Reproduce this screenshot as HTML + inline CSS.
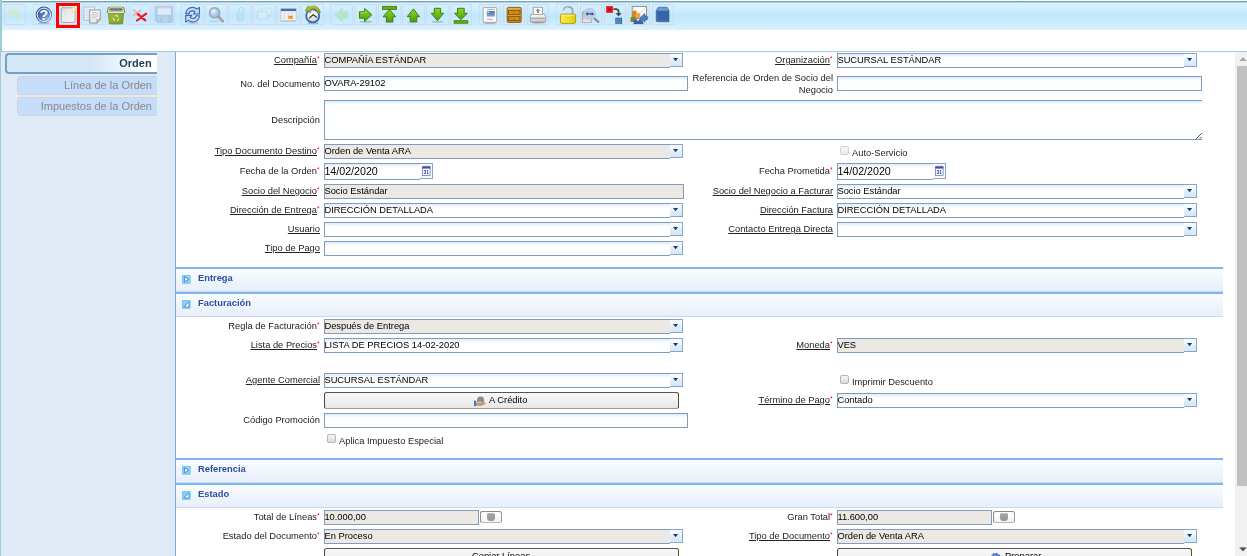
<!DOCTYPE html><html lang="es"><head><meta charset="utf-8"><title>Orden de Venta</title><style>
*{box-sizing:border-box;margin:0;padding:0}
#all{position:absolute;left:0;top:0;width:1247px;height:556px;will-change:transform}
html,body{width:1247px;height:556px;overflow:hidden;background:#fff}
body{position:relative;font-family:"Liberation Sans",sans-serif;font-size:9.33px;color:#222}
.abs{position:absolute}
#tb{position:absolute;left:0;top:1px;width:1247px;height:29px;background:linear-gradient(#78a5c1 0,#78a5c1 1px,#a5cfe2 1px,#a5cfe2 2px,#d9f3fe 2px,#d2effe 20%,#bfe8fd 52%,#cdecfd 78%,#daf3fe 100%)}
#lb{position:absolute;left:0;top:0;width:2px;height:52px;background:#9ccbdc}
#lb2{position:absolute;left:0;top:52px;width:1px;height:504px;background:#9ccbdc}
.tbtn{position:absolute;top:4px;width:22px;height:21px;border:1px solid #d2d9ee}
.tbtn svg{position:absolute;left:-1px;top:-1px;width:22px;height:21px;overflow:visible}

#hl{position:absolute;left:56px;top:3px;width:24px;height:25px;border:3px solid #f00;z-index:5}
#sep{position:absolute;left:2px;top:51px;width:1245px;height:1px;background:#a3cde0}
#left{position:absolute;left:1px;top:52px;width:174px;height:504px;background:#e0e9f6}
#lborder{position:absolute;left:175px;top:52px;width:1px;height:504px;background:#80a9ca}
.tab0{position:absolute;left:5px;top:53px;width:152px;height:21px;border:2px solid #72a1c5;border-right:0;border-radius:4px 0 0 4px;background:linear-gradient(90deg,#d3e7f4 0,#d3e7f4 55%,#fff 92%);font-weight:bold;font-size:11px;color:#1f3f5c;text-align:right;padding-right:5.4px;line-height:17px}
.tab1{position:absolute;left:17px;width:140px;height:19px;border:1px solid #d5d2d0;border-right:0;border-radius:4px 0 0 4px;background:#c5dcfb;font-size:11px;color:#8a8a8a;text-align:right;padding-right:5px;line-height:16px}
.lbl{position:absolute;text-align:right;white-space:nowrap;line-height:12px;font-size:9.33px;color:#222}
.lbl u{text-decoration:underline}
.lbl i{font-style:normal;color:#f00;font-size:6.5px;position:relative;top:-2.5px;display:inline-block;width:2px}
.f{position:absolute;height:15px;border:1px solid #7f9bbd;background:#fff;font-size:9.33px;line-height:12px;white-space:nowrap;color:#000;text-indent:-.6px;
 background-image:linear-gradient(#dcedfb 0,#fff 4px)}
.f.ro{background:#ece9e4}
.f.dt{height:17px;font-size:10.67px;line-height:13px;padding-top:.5px}
.sb{position:absolute;width:13px;height:14px;border:1px solid #8aa5c5;border-left:0;background:linear-gradient(#f8fcff 0,#eef7fd 35%,#dcedf9 60%,#d4e8f7 100%)}
.sb:after{content:"";position:absolute;left:3px;top:4px;width:5.2px;height:3.2px;background:#1c3f6e;clip-path:polygon(0 0,100% 0,50% 100%)}
.sb.d{height:16px;background:linear-gradient(#fff,#f2f8fd)}
.sb.d:after{display:none}
.sb.d svg{position:absolute;left:1.5px;top:0px;width:9px;height:12.6px}
.grp{position:absolute;left:176px;width:1047px;height:25px;border-top:2px solid #7eb6f0;border-bottom:1px solid #c8daf3;background:linear-gradient(#fafcff 0,#f0f5fc 50%,#e8effa 100%);font-weight:bold;color:#2c4f9c;font-size:9.33px;line-height:12px}
.grp span{position:absolute;left:22px;top:3px}
.grp b{position:absolute;left:6px;top:6px;width:9px;height:9px}
.grp b svg{position:absolute;left:0;top:0;width:8.6px;height:9.2px}
.btn{position:absolute;height:17px;border:1px solid #555;border-left-color:#444;border-right:1.5px solid #5c4e1c;border-bottom-color:#9a9a9a;border-radius:2.5px;background:linear-gradient(#f9f9f9,#e7e7e7);font-size:9.33px;line-height:12px;color:#000;white-space:nowrap}
.btn span{position:absolute;top:1px}
.btn svg{position:absolute}
.cbtn{position:absolute;top:511px;width:22px;height:12px;border:1px solid #8a8a8a;border-right:1.5px solid #a39b74;border-bottom-color:#b8b8b8;border-radius:2.5px;background:linear-gradient(#fff,#f3f3f3)}
.cbtn i{position:absolute;left:6.2px;top:1.2px;width:7.6px;height:7.6px;border-radius:1.5px 1.5px 3.5px 3.5px;background:linear-gradient(#c4c4bc 0,#a2a2a2 18%,#969696 100%)}
.cb{position:absolute;width:9px;height:9px;border:1px solid #b5b5b5;border-radius:2px;background:linear-gradient(#f4f4f4,#dcdcdc)}
.cbl{position:absolute;font-size:9.33px;line-height:12px;white-space:nowrap;color:#222}
#sbar{position:absolute;left:1235px;top:52px;width:12px;height:504px;background:#f1f1f1}
#sthumb{position:absolute;left:1237px;top:66px;width:10px;height:420px;background:#c1c1c1}
.sarr{position:absolute;left:1239px;width:8px;height:4.4px;clip-path:polygon(0 100%,50% 0,100% 100%)}
</style></head><body><div id="all">
<div id="tb"></div><div id="lb"></div><div id="lb2"></div>
<div class="tbtn dis" style="left:4px"><svg viewBox="0 0 22 21"><path d="M2.8 8.1 L8.8 2.3 V5.6 C13.2 5.6 16 8.2 16 11.6 C16 14.8 13.6 17.3 11.6 18 C13 16.2 13.4 13.6 12 12.1 C11.1 11.1 10 10.8 8.8 10.8 V13.7 Z" fill="#d8e8b8" stroke="#d2e4b2" stroke-width=".5" opacity=".6"/></svg></div>
<div class="tbtn" style="left:33px"><svg viewBox="0 0 22 21"><defs><radialGradient id="hg" cx=".7" cy=".75" r=".8"><stop offset="0" stop-color="#8fb0da"/><stop offset=".6" stop-color="#4a72b0"/><stop offset="1" stop-color="#34589a"/></radialGradient></defs><ellipse cx="11" cy="19" rx="6" ry="1" fill="#456" opacity=".3"/><circle cx="10.9" cy="10.8" r="8.2" fill="url(#hg)"/><circle cx="10.9" cy="10.8" r="6.7" fill="none" stroke="#fff" stroke-width=".9"/><text x="10.9" y="16" text-anchor="middle" font-family="Liberation Sans,sans-serif" font-weight="bold" font-size="14.5" fill="#fff">?</text></svg></div>
<div class="tbtn" style="left:57px"><svg viewBox="0 0 22 21"><defs><linearGradient id="ng" x1="0" y1="0" x2="1" y2="1"><stop offset="0" stop-color="#dcdcdc"/><stop offset=".5" stop-color="#ececec"/><stop offset="1" stop-color="#f4f4f4"/></linearGradient></defs><rect x="4.3" y="3.8" width="13.8" height="14.6" rx=".8" fill="url(#ng)" stroke="#a9a9a3" stroke-width="1"/><path d="M5.5 8 l.8 1 M5.5 11 l.8 1 M5.5 14 l.8 1" stroke="#fff" stroke-width=".8"/><circle cx="16.6" cy="5.6" r="2.6" fill="#f1e27c" opacity=".9"/><circle cx="16.6" cy="5.6" r="1" fill="#fffbe0"/></svg></div>
<div class="tbtn" style="left:81px"><svg viewBox="0 0 22 21"><defs><linearGradient id="cg" x1="0" y1="0" x2="0" y2="1"><stop offset="0" stop-color="#fff"/><stop offset="1" stop-color="#e4e4e4"/></linearGradient></defs><rect x="2.9" y="2.9" width="10.6" height="13.2" fill="#e8f2fb" stroke="#a9b2b4" stroke-width=".8"/><path d="M4.5 5.5h7.4M4.5 7.5h7.4M4.5 9.5h4M4.5 11.5h4M4.5 13.5h4" stroke="#c4d8ea" stroke-width=".8"/><path d="M8.7 6 H19.2 V15.8 L15.8 19.1 H8.7 Z" fill="url(#cg)" stroke="#83837e" stroke-width=".8" stroke-linejoin="miter"/><path d="M10.4 8.6h7M10.4 10.3h7M10.4 12.1h7M10.4 13.9h5" stroke="#c2c2c2" stroke-width=".9"/><path d="M19.2 15.8 H15.8 V19.1 Z" fill="#dadada" stroke="#83837e" stroke-width=".6" stroke-linejoin="round"/></svg></div>
<div class="tbtn" style="left:105px"><svg viewBox="0 0 22 21"><defs><linearGradient id="dg" x1="0" y1="0" x2="1" y2="1"><stop offset="0" stop-color="#9cc03a"/><stop offset="1" stop-color="#7fa024"/></linearGradient><linearGradient id="dg2" x1="0" y1="0" x2="0" y2="1"><stop offset="0" stop-color="#3c3c3c"/><stop offset=".5" stop-color="#8a8a8a"/><stop offset="1" stop-color="#d8d8d8"/></linearGradient></defs><ellipse cx="11" cy="19.6" rx="8" ry=".9" fill="#345" opacity=".3"/><path d="M3.4 8 L4.3 19 Q4.4 19.7 5.1 19.7 H16.9 Q17.6 19.7 17.7 19 L18.6 8 Z" fill="url(#dg)" stroke="#6c8a1c" stroke-width=".8"/><path d="M2.2 8 L3 3.9 Q3.2 3.1 4 3.1 H18 Q18.8 3.1 19 3.9 L19.8 8 Q19.8 9 18.8 9 H3.2 Q2.2 9 2.2 8 Z" fill="#80a226" stroke="#6a861c" stroke-width=".7"/><path d="M3.4 8.4 L4.2 3.9 H17.8 L18.6 8.4 Z" fill="url(#dg2)" stroke="#f2f2f2" stroke-width=".9" stroke-linejoin="round"/><circle cx="11.1" cy="14.3" r="2.7" fill="none" stroke="#fff" stroke-width="1.3" stroke-dasharray="3.4 2.25" opacity=".7"/></svg></div>
<div class="tbtn" style="left:129px"><svg viewBox="0 0 22 21"><path d="M4.7 6.1 L10.3 10.6 M11.8 6.3 L4.5 11.6" stroke="#f7a9a9" stroke-width="1.7" stroke-linecap="round"/><path d="M8.8 10.1 L16.3 16.4 M17.1 9.6 L8 16.5" stroke="#f80f14" stroke-width="2.1" stroke-linecap="round"/></svg></div>
<div class="tbtn dis" style="left:153px"><svg viewBox="0 0 22 21"><path d="M3.3 2.3 H18.7 Q19.7 2.3 19.7 3.3 V17.7 Q19.7 18.7 18.7 18.7 H4.3 L2.3 16.7 V3.3 Q2.3 2.3 3.3 2.3 Z" fill="#a9cdf0" stroke="#9cc4ec" stroke-width=".6"/><rect x="4.6" y="3" width="13.3" height="7.8" fill="#dcecf9"/><rect x="4.6" y="3" width="13.3" height="1.4" fill="#e7c9d2"/><rect x="5.6" y="12.4" width="9" height="6.1" fill="#b9d4e2"/><rect x="7.3" y="13.4" width="2" height="4.2" fill="#a6c6e2"/></svg></div>
<div class="tbtn" style="left:181px;width:23px"><svg viewBox="0 0 22 21"><ellipse cx="12" cy="18.9" rx="6" ry=".8" fill="#456" opacity=".25"/><path d="M4.8 9.6 C4.8 5.8 8 3.4 11.4 3.4 C13.2 3.4 14.6 4 15.8 5 L18.5 3.4 V10 H12.4 L14 8 C13.2 7.2 12.4 6.9 11.4 6.9 C9.4 6.9 8.3 8.2 8 9.6 Z" fill="#c8d8ee" stroke="#3866ae" stroke-width="1.1" stroke-linejoin="round"/><path d="M18.4 11.8 C18.4 15.6 15.2 18 11.8 18 C10 18 8.6 17.4 7.4 16.4 L4.7 18 V11.4 H10.8 L9.2 13.4 C10 14.2 10.8 14.5 11.8 14.5 C13.8 14.5 14.9 13.2 15.2 11.8 Z" fill="#c8d8ee" stroke="#3866ae" stroke-width="1.1" stroke-linejoin="round"/></svg></div>
<div class="tbtn" style="left:205px;width:23px"><svg viewBox="0 0 22 21"><defs><radialGradient id="fg" cx=".38" cy=".35" r=".7"><stop offset="0" stop-color="#f2f8fe"/><stop offset=".45" stop-color="#b5d3f3"/><stop offset="1" stop-color="#8ab6ea"/></radialGradient></defs><ellipse cx="9.5" cy="17.3" rx="6" ry="1.1" fill="#567" opacity=".14"/><path d="M13.1 12.4 L17.7 17.2" stroke="#8f8f8f" stroke-width="2.6" stroke-linecap="round"/><path d="M13.3 12.6 L17.5 17" stroke="#cfcfcf" stroke-width="1" stroke-linecap="round"/><circle cx="9.6" cy="8.8" r="5.1" fill="url(#fg)" stroke="#a3a3a3" stroke-width="1.4"/></svg></div>
<div class="tbtn dis" style="left:229px;width:23px"><svg viewBox="0 0 22 21"><path d="M8.3 9 V15.2 Q8.3 17.8 11.2 17.8 Q14.3 17.8 14.3 15 V6 Q14.3 3.2 12 3.2 Q9.8 3.2 9.8 6 V14.4 Q9.8 15.8 11.1 15.8 Q12.3 15.8 12.3 14.4 V7.5" fill="none" stroke="#aad2f2" stroke-width="1" stroke-linecap="round" opacity=".8"/></svg></div>
<div class="tbtn dis" style="left:253px;width:23px"><svg viewBox="0 0 22 21"><path d="M9.4 4.1 H17.7 Q18.2 4.1 18.2 4.6 V10.3 Q18.2 10.8 17.7 10.8 H16.6 V12.4 L15 10.8 H9.4 Q8.9 10.8 8.9 10.3 V4.6 Q8.9 4.1 9.4 4.1 Z" fill="#d6eefb" stroke="#c3d6e3" stroke-width=".7"/><path d="M5.2 7.6 H14.1 Q14.6 7.6 14.6 8.1 V14.2 Q14.6 14.7 14.1 14.7 H8.2 L6 16.8 V14.7 H5.2 Q4.7 14.7 4.7 14.2 V8.1 Q4.7 7.6 5.2 7.6 Z" fill="#d3ecfb" stroke="#c0d4e2" stroke-width=".7"/></svg></div>
<div class="tbtn" style="left:277px;width:23px"><svg viewBox="0 0 22 21"><rect x="3.8" y="16.2" width="15.4" height="1.2" fill="#8a8f90" opacity=".7"/><rect x="3.9" y="4.8" width="15.2" height="11.8" fill="#f6f6f4" stroke="#b9bbb8" stroke-width=".5"/><path d="M3.9 9.4h15.2M3.9 11.8h15.2M3.9 14.2h15.2M7.6 7v9.6M11.4 7v9.6M15.2 7v9.6" stroke="#d4d6d4" stroke-width=".6"/><rect x="3.8" y="4.7" width="15.4" height="2.4" fill="#3f6db6"/><rect x="11.4" y="11.8" width="4.4" height="3" rx=".6" fill="#f28a0e"/><rect x="12.4" y="12.9" width="2.4" height=".8" fill="#fbb960"/></svg></div>
<div class="tbtn" style="left:301px;width:23px"><svg viewBox="0 0 22 21"><defs><linearGradient id="hig" x1="0" y1="0" x2="0" y2="1"><stop offset="0" stop-color="#ffffff"/><stop offset="1" stop-color="#d2d2d2"/></linearGradient><linearGradient id="hig2" x1="0" y1="0" x2="0" y2="1"><stop offset="0" stop-color="#b4cc3c"/><stop offset="1" stop-color="#86a226"/></linearGradient></defs><ellipse cx="12" cy="19.4" rx="6" ry=".8" fill="#456" opacity=".3"/><circle cx="11.7" cy="11.9" r="6.5" fill="url(#hig)" stroke="#3a68b0" stroke-width="1.8"/><path d="M8.6 13.8 L12.2 10.7 L15.8 13.4" fill="none" stroke="#222" stroke-width="1.1" stroke-linecap="round" stroke-linejoin="round"/><path d="M19.3 9 C19 4.6 15.6 2 12.5 2 C10.8 2 9.6 2.4 8.4 3.2 L7.2 1.8 L4.3 6.9 L10 8.6 L9.5 5.9 C10.4 5.1 11.6 4.7 13 4.7 C15 4.9 16.5 6.4 16.9 9 Z" fill="url(#hig2)" stroke="#71891c" stroke-width=".6" stroke-linejoin="round"/></svg></div>
<div class="tbtn dis" style="left:330px;width:23px"><svg viewBox="0 0 22 21"><path d="M4.7 10.8 L12.4 4.1 V7.3 H17.8 V14.4 H12.4 V17.9 Z" fill="#b7e0c9" stroke="#b0dcc6" stroke-width=".6" stroke-linejoin="round" opacity=".85"/></svg></div>
<div class="tbtn" style="left:354px;width:23px"><svg viewBox="0 0 22 21"><defs><linearGradient id="gg" x1="0" y1="0" x2="0" y2="1"><stop offset="0" stop-color="#8fd62a"/><stop offset="1" stop-color="#4aa008"/></linearGradient></defs><ellipse cx="12" cy="17.8" rx="6.5" ry="1.1" fill="#345" opacity=".25"/><path d="M17.8 10.8 L10.6 4.4 V7.8 H5.5 V14.2 H10.6 V17.4 Z" fill="url(#gg)" stroke="#3f7f0c" stroke-width="1" stroke-linejoin="round"/><path d="M6.5 8.8 H11.6 V6.6" fill="none" stroke="#b9e87a" stroke-width=".8" opacity=".8"/></svg></div>
<div class="tbtn" style="left:378px;width:23px"><svg viewBox="0 0 22 21"><defs><linearGradient id="gg" x1="0" y1="0" x2="0" y2="1"><stop offset="0" stop-color="#8fd62a"/><stop offset="1" stop-color="#4aa008"/></linearGradient></defs><ellipse cx="11.5" cy="18.3" rx="5" ry=".8" fill="#345" opacity=".25"/><path d="M11.5 5.6 L5 12.8 H8.4 V17.8 H14.9 V12.8 H17.8 Z" fill="url(#gg)" stroke="#3f7f0c" stroke-width="1" stroke-linejoin="round"/><rect x="4.5" y="2.4" width="14" height="3" fill="#63b312" stroke="#3f7f0c" stroke-width=".9"/></svg></div>
<div class="tbtn" style="left:402px;width:23px"><svg viewBox="0 0 22 21"><defs><linearGradient id="gg" x1="0" y1="0" x2="0" y2="1"><stop offset="0" stop-color="#8fd62a"/><stop offset="1" stop-color="#4aa008"/></linearGradient></defs><ellipse cx="11.4" cy="18.3" rx="6" ry=".9" fill="#345" opacity=".2"/><path d="M11.4 4.9 L5.2 12.7 H8.2 V17.7 H14.7 V12.7 H17.6 Z" fill="url(#gg)" stroke="#3f7f0c" stroke-width="1" stroke-linejoin="round"/></svg></div>
<div class="tbtn" style="left:426px;width:23px"><svg viewBox="0 0 22 21"><defs><linearGradient id="gg" x1="0" y1="0" x2="0" y2="1"><stop offset="0" stop-color="#8fd62a"/><stop offset="1" stop-color="#4aa008"/></linearGradient></defs><ellipse cx="11.4" cy="17.8" rx="6" ry="1" fill="#345" opacity=".25"/><path d="M11.4 16.6 L5.2 9.3 H8.3 V4.3 H14.6 V9.3 H17.7 Z" fill="url(#gg)" stroke="#3f7f0c" stroke-width="1" stroke-linejoin="round"/></svg></div>
<div class="tbtn" style="left:450px"><svg viewBox="0 0 22 21"><defs><linearGradient id="gg" x1="0" y1="0" x2="0" y2="1"><stop offset="0" stop-color="#8fd62a"/><stop offset="1" stop-color="#4aa008"/></linearGradient></defs><path d="M10.9 15.6 L4.5 9.3 H7.5 V4.3 H14.2 V9.3 H17.4 Z" fill="url(#gg)" stroke="#3f7f0c" stroke-width="1" stroke-linejoin="round"/><rect x="4.2" y="16.7" width="13.6" height="2.5" fill="#63b312" stroke="#3f7f0c" stroke-width=".9"/></svg></div>
<div class="tbtn" style="left:479px"><svg viewBox="0 0 22 21"><defs><linearGradient id="rg" x1="0" y1="0" x2="0" y2="1"><stop offset="0" stop-color="#3f7ad6"/><stop offset=".7" stop-color="#7d93b4"/><stop offset="1" stop-color="#86a6d8"/></linearGradient></defs><ellipse cx="11" cy="19" rx="7" ry=".9" fill="#345" opacity=".3"/><rect x="4.2" y="3.6" width="13.6" height="14.7" rx=".8" fill="#fafafa" stroke="#a9a9a9" stroke-width="1"/><path d="M8 5.4h7.6" stroke="#9a9a9a" stroke-width=".8"/><path d="M8 15.3h5.8" stroke="#9a9a9a" stroke-width=".8"/><rect x="7.8" y="7" width="8" height="5.6" fill="url(#rg)"/><rect x="8.4" y="7.6" width="1.6" height="1.4" fill="#e8e89a"/></svg></div>
<div class="tbtn" style="left:503px"><svg viewBox="0 0 22 21"><rect x="4.2" y="3.4" width="14" height="15" rx="1.2" fill="#d4850c" stroke="#75631a" stroke-width=".9"/><rect x="5" y="4.2" width="12.4" height="1.4" fill="#f2b35a"/><rect x="5.6" y="6.6" width="11.2" height="4" fill="#d8880d" stroke="#6e5f1c" stroke-width=".8"/><rect x="5.6" y="12.4" width="11.2" height="4" fill="#d8880d" stroke="#6e5f1c" stroke-width=".8"/><path d="M9.6 10.4 q1.6-1 3.2 0 M9.6 16.2 q1.6-1 3.2 0" stroke="#7a6a22" stroke-width=".8" fill="none"/><path d="M4.6 11.4h13.2" stroke="#f0a840" stroke-width=".7"/></svg></div>
<div class="tbtn" style="left:527px"><svg viewBox="0 0 22 21"><defs><linearGradient id="pg" x1="0" y1="0" x2="0" y2="1"><stop offset="0" stop-color="#fdfdfd"/><stop offset=".5" stop-color="#e6e6e6"/><stop offset="1" stop-color="#cfcfcf"/></linearGradient></defs><ellipse cx="11" cy="18.6" rx="7" ry="1" fill="#345" opacity=".35"/><path d="M4.6 10 H17.4 L18.7 12.4 V17.2 Q18.7 18 17.9 18 H4.1 Q3.3 18 3.3 17.2 V12.4 Z" fill="url(#pg)" stroke="#8c8c8c" stroke-width=".8"/><rect x="6.2" y="3.3" width="9.4" height="7.2" fill="#fdfdfd" stroke="#9a9a9a" stroke-width=".8"/><path d="M10.9 4.6 L13.4 7 H11.9 V9 H9.9 V7 H8.4 Z" fill="#8a8a8a"/><path d="M4.2 14.2 H17.8" stroke="#8a8a8a" stroke-width=".9"/><path d="M4.6 16 H17.4" stroke="#bbb" stroke-width=".7"/></svg></div>
<div class="tbtn" style="left:556px"><svg viewBox="0 0 22 21"><defs><linearGradient id="lg" x1="0" y1="0" x2="1" y2="0"><stop offset="0" stop-color="#f8ea4a"/><stop offset=".6" stop-color="#efdc28"/><stop offset="1" stop-color="#e2c90c"/></linearGradient></defs><path d="M7.6 6.4 Q8 2.9 12.2 2.9 Q16.6 2.9 16.6 7 V10" fill="none" stroke="#a6a6a6" stroke-width="1.9"/><path d="M7.9 6.2 Q8.4 3.4 12.2 3.4" fill="none" stroke="#e4e4e4" stroke-width=".7"/><rect x="4.4" y="10.1" width="15.2" height="9.3" rx="1.4" fill="url(#lg)" stroke="#b39d12" stroke-width="1"/><path d="M5.4 11.2 H18.6" stroke="#fbf3a0" stroke-width=".8"/></svg></div>
<div class="tbtn" style="left:580px"><svg viewBox="0 0 22 21"><defs><linearGradient id="zg" x1="0" y1="0" x2="0" y2="1"><stop offset="0" stop-color="#a9a9a9"/><stop offset="1" stop-color="#efefef"/></linearGradient></defs><path d="M2.4 8.4 L3.4 7.4 H11.4 V18.6 H2.4 Z" fill="url(#zg)" stroke="#9d9d9d" stroke-width=".8"/><path d="M14.2 14.3 L18.4 17.9" stroke="#8c8c8c" stroke-width="2.2" stroke-linecap="round"/><circle cx="9.8" cy="9.9" r="5.6" fill="#b4d0ee" fill-opacity=".85" stroke="#c4c8cc" stroke-width="1.2"/><path d="M5.6 9.9 L7.8 8 V9.2 H11.8 V8 L14 9.9 L11.8 11.8 V10.6 H7.8 V11.8 Z" fill="#2d4f86"/></svg></div>
<div class="tbtn" style="left:604px"><svg viewBox="0 0 22 21"><rect x="2.1" y="2" width="7" height="6.9" fill="#e0141a"/><rect x="2.6" y="2.5" width="6" height="5.9" fill="none" stroke="#f0454a" stroke-width=".6"/><circle cx="5.6" cy="5.5" r="1.2" fill="#b8080c"/><path d="M9.4 5.2 H12 Q14.6 5.2 14.6 8 V10" fill="none" stroke="#4a4a4a" stroke-width="1.7"/><path d="M11.5 9.3 H17.6 L14.6 12.3 Z" fill="#3c3c3c"/><rect x="11.3" y="13.7" width="6.8" height="6.1" fill="#3465a4"/><rect x="12.6" y="15" width="4.2" height="3.5" fill="#4e7fc0" stroke="#6b98d2" stroke-width=".6"/></svg></div>
<div class="tbtn" style="left:628px"><svg viewBox="0 0 22 21"><rect x="4.2" y="2.4" width="14.4" height="11.6" fill="#fdfdfd" stroke="#8a836f" stroke-width=".9"/><path d="M4.4 2.8 L11 9 M18.4 2.8 L11 10" stroke="#cfcfcf" stroke-width=".7" fill="none"/><path d="M4 9 Q4 6.6 6.4 6.6 Q8.8 6.6 8.8 9 V15 H4 Z" fill="#c78a32"/><rect x="2.5" y="13" width="4.6" height="5" rx="1" fill="#6e8c2a"/><circle cx="9.9" cy="11.6" r="2.6" fill="#f3a236"/><path d="M5.6 19.6 Q5.6 14.4 9.9 14.4 Q14.6 14.4 15.4 19.6 Z" fill="#3465a4"/><path d="M8.4 15 L9.9 17.6 L11.6 15 Z" fill="#e8eef8"/><path d="M12 13.8 L16.8 9.4 V11.6 Q19.6 11.8 19.8 13.4 Q19.8 16.6 16.8 16.2 V18.2 Z" fill="#4a7cc0" stroke="#2c5596" stroke-width=".6"/><path d="M5.6 19.6 H15.4" stroke="#5c2a6a" stroke-width=".8"/></svg></div>
<div class="tbtn" style="left:652px"><svg viewBox="0 0 22 21"><ellipse cx="12" cy="17.8" rx="7" ry=".8" fill="#345" opacity=".25"/><path d="M4.2 17 V6.6 L6.2 3.2 H15 L17 6.6 V17 Q17 17.6 16.4 17.6 H4.8 Q4.2 17.6 4.2 17 Z" fill="#3465a8" stroke="#2f5c9c" stroke-width=".6"/><path d="M4.4 6.8 L6.4 3.4 H14.8 L16.8 6.8 Z" fill="#6c9ad2"/><path d="M5 7.4 V16.8 H16.2" fill="none" stroke="#4f7fc0" stroke-width=".6"/></svg></div>
<div id="hl"></div>
<div id="sep"></div><div id="left"></div><div id="lborder"></div>
<div class="tab0">Orden</div>
<div class="tab1" style="top:76px">Línea de la Orden</div>
<div class="tab1" style="top:97px">Impuestos de la Orden</div>
<div class="lbl" style="right:928px;top:54px"><u>Compañía</u><i>*</i></div>
<div class="f ro" style="left:324px;top:53px;width:346px;border-right:0">COMPAÑÍA ESTÁNDAR</div><div class="sb" style="left:670px;top:53px"></div>
<div class="lbl" style="right:415px;top:54px"><u>Organización</u><i>*</i></div>
<div class="f" style="left:837px;top:53px;width:347px;border-right:0">SUCURSAL ESTÁNDAR</div><div class="sb" style="left:1184px;top:53px"></div>
<div class="lbl" style="right:927px;top:78px">No. del Documento</div>
<div class="f" style="left:324px;top:76px;width:364px">OVARA-29102</div>
<div class="lbl" style="right:414px;top:72px;line-height:12px">Referencia de Orden de Socio del<br>Negocio</div>
<div class="f" style="left:837px;top:76px;width:365px"></div>
<div class="lbl" style="right:927px;top:114px">Descripción</div>
<div class="f" style="left:324px;top:100px;width:878px;height:40px;border-right:0"><svg style="position:absolute;right:0;bottom:0;width:7px;height:7px" viewBox="0 0 7 7"><path d="M1 7 L7 1 M4.6 7 L7 4.6" stroke="#555" stroke-width="1"/></svg></div>
<div class="lbl" style="right:928px;top:145px"><u>Tipo Documento Destino</u><i>*</i></div>
<div class="f ro" style="left:324px;top:144px;width:346px;border-right:0">Orden de Venta ARA</div><div class="sb" style="left:670px;top:144px"></div>
<div class="cb" style="left:840px;top:146px;opacity:.6"></div><div class="cbl" style="left:852px;top:147px">Auto-Servicio</div>
<div class="lbl" style="right:928px;top:165px">Fecha de la Orden<i>*</i></div>
<div class="f dt" style="left:324px;top:163px;width:96px;border-right:0">14/02/2020</div><div class="sb d" style="left:420px;top:163px"><svg viewBox="0 0 10 13"><rect x=".6" y="2.6" width="8.4" height="9.6" fill="#fff" stroke="#5a6cc0" stroke-width=".8"/><rect x=".4" y="2.2" width="8.8" height="2.4" fill="#3c50aa"/><path d="M2.6 1.2v1.6M4.8 1.2v1.6M7 1.2v1.6" stroke="#6f80c8" stroke-width=".9"/><text x="4.8" y="10.4" font-size="5.6" font-weight="bold" font-family="Liberation Sans,sans-serif" text-anchor="middle" fill="#2c3c8c">31</text></svg></div>
<div class="lbl" style="right:415px;top:165px">Fecha Prometida<i>*</i></div>
<div class="f dt" style="left:837px;top:163px;width:96px;border-right:0">14/02/2020</div><div class="sb d" style="left:933px;top:163px"><svg viewBox="0 0 10 13"><rect x=".6" y="2.6" width="8.4" height="9.6" fill="#fff" stroke="#5a6cc0" stroke-width=".8"/><rect x=".4" y="2.2" width="8.8" height="2.4" fill="#3c50aa"/><path d="M2.6 1.2v1.6M4.8 1.2v1.6M7 1.2v1.6" stroke="#6f80c8" stroke-width=".9"/><text x="4.8" y="10.4" font-size="5.6" font-weight="bold" font-family="Liberation Sans,sans-serif" text-anchor="middle" fill="#2c3c8c">31</text></svg></div>
<div class="lbl" style="right:928px;top:185px"><u>Socio del Negocio</u><i>*</i></div>
<div class="f ro" style="left:324px;top:184px;width:360px">Socio Estándar</div>
<div class="lbl" style="right:414px;top:185px"><u>Socio del Negocio a Facturar</u></div>
<div class="f" style="left:837px;top:184px;width:347px;border-right:0">Socio Estándar</div><div class="sb" style="left:1184px;top:184px"></div>
<div class="lbl" style="right:928px;top:204px"><u>Dirección de Entrega</u><i>*</i></div>
<div class="f" style="left:324px;top:203px;width:346px;border-right:0">DIRECCIÓN DETALLADA</div><div class="sb" style="left:670px;top:203px"></div>
<div class="lbl" style="right:414px;top:204px"><u>Dirección Factura</u></div>
<div class="f" style="left:837px;top:203px;width:347px;border-right:0">DIRECCIÓN DETALLADA</div><div class="sb" style="left:1184px;top:203px"></div>
<div class="lbl" style="right:927px;top:223px"><u>Usuario</u></div>
<div class="f" style="left:324px;top:222px;width:346px;border-right:0"></div><div class="sb" style="left:670px;top:222px"></div>
<div class="lbl" style="right:414px;top:223px"><u>Contacto Entrega Directa</u></div>
<div class="f" style="left:837px;top:222px;width:347px;border-right:0"></div><div class="sb" style="left:1184px;top:222px"></div>
<div class="lbl" style="right:927px;top:242px"><u>Tipo de Pago</u></div>
<div class="f" style="left:324px;top:241px;width:346px;border-right:0"></div><div class="sb" style="left:670px;top:241px"></div>
<div class="grp" style="top:267px"><b><svg viewBox="0 0 9 9.6"><rect x=".3" y="8.4" width="8.4" height="1" rx=".5" fill="#8aa" opacity=".5"/><rect x="0" y="0" width="9" height="9" rx="1" fill="#6cc8ec"/><rect x=".9" y=".9" width="7.2" height="7.2" fill="#86d3f1"/><path d="M2.7 1.9 L7 4.5 L2.7 7.1 Z" fill="#fff" stroke="#4474d6" stroke-width=".9" stroke-linejoin="round"/></svg></b><span>Entrega</span></div>
<div class="grp" style="top:292px"><b><svg viewBox="0 0 9 9.6"><rect x=".3" y="8.4" width="8.4" height="1" rx=".5" fill="#8aa" opacity=".5"/><rect x="0" y="0" width="9" height="9" rx="1" fill="#6cc8ec"/><rect x=".9" y=".9" width="7.2" height="7.2" fill="#86d3f1"/><path d="M7.2 2 V7.2 H2 Z" fill="#fff" stroke="#4474d6" stroke-width=".8" stroke-linejoin="round"/></svg></b><span>Facturación</span></div>
<div class="lbl" style="right:928px;top:320px">Regla de Facturación<i>*</i></div>
<div class="f ro" style="left:324px;top:319px;width:346px;border-right:0">Después de Entrega</div><div class="sb" style="left:670px;top:319px"></div>
<div class="lbl" style="right:928px;top:339px"><u>Lista de Precios</u><i>*</i></div>
<div class="f" style="left:324px;top:338px;width:346px;border-right:0">LISTA DE PRECIOS 14-02-2020</div><div class="sb" style="left:670px;top:338px"></div>
<div class="lbl" style="right:415px;top:339px"><u>Moneda</u><i>*</i></div>
<div class="f ro" style="left:837px;top:338px;width:347px;border-right:0">VES</div><div class="sb" style="left:1184px;top:338px"></div>
<div class="lbl" style="right:927px;top:374px"><u>Agente Comercial</u></div>
<div class="f" style="left:324px;top:373px;width:346px;border-right:0">SUCURSAL ESTÁNDAR</div><div class="sb" style="left:670px;top:373px"></div>
<div class="cb" style="left:840px;top:375px"></div><div class="cbl" style="left:852px;top:376px">Imprimir Descuento</div>
<div class="btn" style="left:324px;top:392px;width:355px"><svg style="left:149px;top:3px;width:12px;height:11px" viewBox="0 0 12 11"><path d="M3 5 Q3 .6 6.6 .6 Q10.2 .6 10.2 5 V6.4 H3 Z" fill="#8c8c8c"/><path d="M1.6 5.6 H8 Q9 5.6 9 6.6 L11.8 6.8 Q12 7.6 11 8.2 L7.6 9.8 H1.6 Z" fill="#b89a74"/><path d="M2.4 6.4 H7" stroke="#e6d5bd" stroke-width=".9"/><rect x=".2" y="4.6" width="1.5" height="5.6" fill="#2a55a8"/></svg><span style="left:164px">A Crédito</span></div>
<div class="lbl" style="right:415px;top:394px"><u>Término de Pago</u><i>*</i></div>
<div class="f" style="left:837px;top:393px;width:347px;border-right:0">Contado</div><div class="sb" style="left:1184px;top:393px"></div>
<div class="lbl" style="right:927px;top:414px">Código Promoción</div>
<div class="f" style="left:324px;top:413px;width:364px"></div>
<div class="cb" style="left:327px;top:434px"></div><div class="cbl" style="left:339px;top:435px">Aplica Impuesto Especial</div>
<div class="grp" style="top:458px"><b><svg viewBox="0 0 9 9.6"><rect x=".3" y="8.4" width="8.4" height="1" rx=".5" fill="#8aa" opacity=".5"/><rect x="0" y="0" width="9" height="9" rx="1" fill="#6cc8ec"/><rect x=".9" y=".9" width="7.2" height="7.2" fill="#86d3f1"/><path d="M2.7 1.9 L7 4.5 L2.7 7.1 Z" fill="#fff" stroke="#4474d6" stroke-width=".9" stroke-linejoin="round"/></svg></b><span>Referencia</span></div>
<div class="grp" style="top:483px"><b><svg viewBox="0 0 9 9.6"><rect x=".3" y="8.4" width="8.4" height="1" rx=".5" fill="#8aa" opacity=".5"/><rect x="0" y="0" width="9" height="9" rx="1" fill="#6cc8ec"/><rect x=".9" y=".9" width="7.2" height="7.2" fill="#86d3f1"/><path d="M7.2 2 V7.2 H2 Z" fill="#fff" stroke="#4474d6" stroke-width=".8" stroke-linejoin="round"/></svg></b><span>Estado</span></div>
<div class="lbl" style="right:928px;top:511px">Total de Líneas<i>*</i></div>
<div class="f ro" style="left:324px;top:510px;width:155px">10.000,00</div>
<div class="lbl" style="right:415px;top:511px">Gran Total<i>*</i></div>
<div class="f ro" style="left:837px;top:510px;width:155px">11.600,00</div>
<div class="lbl" style="right:928px;top:530px">Estado del Documento<i>*</i></div>
<div class="f ro" style="left:324px;top:529px;width:346px;border-right:0">En Proceso</div><div class="sb" style="left:670px;top:529px"></div>
<div class="lbl" style="right:415px;top:530px"><u>Tipo de Documento</u><i>*</i></div>
<div class="f ro" style="left:837px;top:529px;width:347px;border-right:0">Orden de Venta ARA</div><div class="sb" style="left:1184px;top:529px"></div>
<div class="cbtn" style="left:480px"><i></i></div>
<div class="cbtn" style="left:993px"><i></i></div>
<div class="btn" style="left:324px;top:548px;width:355px"><span style="left:147px">Copiar Líneas</span></div>
<div class="btn" style="left:837px;top:548px;width:355px"><svg style="left:152px;top:3px;width:11px;height:11px" viewBox="0 0 11 11"><circle cx="5.5" cy="5.5" r="4" fill="#5a8ad8" stroke="#3a64b8" stroke-width="1.6" stroke-dasharray="1.6 1.5"/><circle cx="5.5" cy="5.5" r="1.6" fill="#dce8f8"/></svg><span style="left:167px">Preparar</span></div>
<div id="sbar"></div><div id="sthumb"></div><div class="sarr" style="top:57px;background:#a3a3a3"></div><div class="sarr" style="top:547px;background:#505050;transform:rotate(180deg)"></div>
</div></body></html>
